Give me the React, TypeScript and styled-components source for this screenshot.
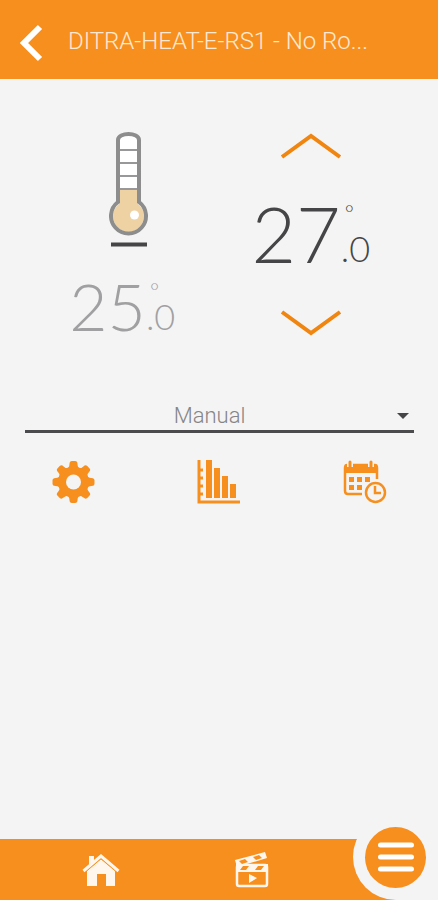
import React, { useState } from "react";
import styled, { createGlobalStyle } from "styled-components";

const orange = "#f78f1e";
const paper = "#f4f4f4";

const GlobalStyle = createGlobalStyle`
  *, *::before, *::after { box-sizing: border-box; }
  body { margin: 0; background: ${paper}; font-family: Roboto, "Liberation Sans", sans-serif; }
  button, select { font: inherit; }
`;

const Screen = styled.div`
  min-height: 100vh;
  display: flex;
  flex-direction: column;
  background: ${paper};
`;

const Header = styled.header`
  display: flex;
  align-items: center;
  gap: 24px;
  height: 79px;
  padding: 6px 20px 0;
  background: ${orange};
`;

const IconButton = styled.button`
  display: flex;
  align-items: center;
  justify-content: center;
  padding: 0;
  border: 0;
  background: none;
  color: ${orange};
  cursor: pointer;

  svg { display: block; }
`;

const Title = styled.h1`
  margin: 0;
  padding-bottom: 4px;
  color: #ffe9d2;
  font-size: 24px;
  font-weight: 300;
  line-height: 32px;
  white-space: nowrap;
`;

const Main = styled.main`
  flex: 1;
  padding: 53px 24px 24px 25px;
`;

const Climate = styled.section`
  display: grid;
  grid-template-columns: 1fr 1fr;
  height: 269px;
`;

const Current = styled.div`
  display: flex;
  flex-direction: column;
  align-items: center;
  gap: 30px;
`;

const Gauge = styled.div`
  padding-left: 14px;

  svg { display: block; }
`;

const Target = styled.div`
  display: flex;
  flex-direction: column;
  align-items: center;
  gap: 40px;
  padding-right: 12px;
`;

const Reading = styled.output<{ $size: number; $height: number; $color: string }>`
  display: flex;
  height: ${(p) => p.$height}px;
  color: ${(p) => p.$color};
  font-family: Lato, "Liberation Sans", sans-serif;
  font-size: ${(p) => p.$size}px;
  font-weight: 300;
  line-height: ${(p) => p.$height - 4}px;
`;

const Fraction = styled.span`
  display: flex;
  flex-direction: column;
  justify-content: space-between;
  padding: 4px 0 8px;
  font-size: 36px;
  font-weight: 300;
  line-height: 28px;
`;

const Degree = styled.span`
  padding-left: 4px;
  font-size: 22px;
  line-height: 18px;
`;

const ModeField = styled.div`
  display: grid;
  align-items: center;
  border-bottom: 3px solid #4b4b4d;

  > * { grid-area: 1 / 1; }
  > svg { justify-self: end; margin-right: 5px; pointer-events: none; }
`;

const ModeSelect = styled.select`
  width: 100%;
  height: 29px;
  padding: 0 20px 0 0;
  appearance: none;
  border: 0;
  background: transparent;
  color: #858587;
  font-size: 22px;
  font-weight: 300;
  line-height: 28px;
  text-align: center;
  text-align-last: center;
`;

const Actions = styled.div`
  display: flex;
  justify-content: space-between;
  padding: 27px 27px 0;
`;

const Footer = styled.footer`
  display: grid;
  grid-template-columns: 1fr 85px;
  align-items: end;
  height: 86px;
`;

const Tabs = styled.nav`
  display: flex;
  justify-content: center;
  gap: 27%;
  height: 61px;
  padding-top: 1px;
  background: ${orange};
`;

const TabLink = styled.a`
  display: flex;
  align-items: center;
  justify-content: center;
  width: 56px;
  color: #fff7ee;

  svg { display: block; }
`;

const MenuCorner = styled.div`
  display: grid;
  height: 86px;
  background: linear-gradient(${orange}, ${orange}) left bottom / 43px 61px no-repeat;
`;

const MenuRing = styled.div`
  display: flex;
  align-items: center;
  justify-content: center;
  border-radius: 43px 0 0 43px;
  background: ${paper};
`;

const MenuButton = styled(IconButton)`
  width: 61px;
  height: 61px;
  border-radius: 50%;
  background: ${orange};
`;

const BackIcon = () => (
  <svg width="24" height="38" viewBox="0 0 24 38" fill="none" stroke="#fff" strokeWidth="6">
    <path d="M20 3 4 19l16 16" />
  </svg>
);

const Thermometer = () => (
  <svg width="40" height="116" viewBox="0 0 40 116" role="img" aria-label="Room temperature">
    <path d="M9 8C9 0 30 0 30 8v62a17.500 17.500 0 1 1-21 0Z" fill="#fff" />
    <path d="M10 58h19v14a15.500 15.500 0 1 1-19 0Z" fill="#efd2a4" />
    <path d="M10 18h19M10 31h19M10 44h19M10 57h19" stroke="#98989a" strokeWidth="2" />
    <path d="M9 8C9 0 30 0 30 8v62a17.500 17.500 0 1 1-21 0Z" fill="none" stroke="#8c8d8c" strokeWidth="4" />
    <circle cx="25.500" cy="83" r="4.500" fill="#fff" />
    <path d="M2 112.500h36" stroke="#454547" strokeWidth="4" />
  </svg>
);

const Chevron = ({ down = false }: { down?: boolean }) => (
  <svg width="62" height="28" viewBox="0 0 62 28" fill="none" stroke="#f0850f" strokeWidth="4">
    <path d={down ? "M2 2 31 23 60 2" : "M2 25 31 4l29 21"} />
  </svg>
);

const GearIcon = () => (
  <svg width="43" height="44" viewBox="-21.5 -22 43 44" fill={orange}>
    {[0, 45, 90, 135, 180, 225, 270, 315].map((a) => (
      <path key={a} transform={`rotate(${a})`} d="M-8-12Q-4-14-4-18Q-4-21-1.500-21H1.500Q4-21 4-18Q4-14 8-12V0H-8Z" />
    ))}
    <circle r="15.500" />
    <circle r="7.500" fill={paper} />
  </svg>
);

const ChartIcon = () => (
  <svg width="44" height="44" viewBox="0 0 44 44" fill={orange}>
    <path d="M9 0h6v38H9zM17 8h6v30h-6zM25 16h6v22h-6zM33 24h6v14h-6z" />
    <path
      d="M2 0v42H43M2 10h4M2 18h4M2 26h4M2 34h4"
      fill="none"
      stroke={orange}
      strokeWidth="3"
    />
  </svg>
);

const ScheduleIcon = () => (
  <svg width="44" height="44" viewBox="0 0 44 44" fill="none" stroke={orange}>
    <path d="M19 34H5q-3 0-3-3V8q0-3 2-3h28q2 0 2 3v11" strokeWidth="2.500" />
    <path d="M2 5h32v8H2z" fill={orange} stroke="none" />
    <path d="M7 1v6M28 1v6" stroke={paper} strokeWidth="6" />
    <path d="M7 2v6M28 2v6" strokeWidth="3" strokeLinecap="round" />
    <path d="M6 17h5v5H6zM14 17h5v5h-5zM22 17h5v5h-5zM6 25h5v5H6zM14 25h5v5h-5z" fill={orange} stroke="none" />
    <circle cx="32.500" cy="32.500" r="12" fill={paper} stroke="none" />
    <circle cx="32.500" cy="32.500" r="9.500" fill={paper} strokeWidth="2.500" />
    <path d="M32 26v7h6" strokeWidth="2.500" />
  </svg>
);

const HomeIcon = () => (
  <svg width="38" height="34" viewBox="0 0 38 34" fill="currentColor">
    <path d="M5 18 19 6l14 12v15h-9V21h-9v12H5Z" />
    <path d="M1 18 19 3l18 15" fill="none" stroke={orange} strokeWidth="5" />
    <path d="M7 3h5v5l-5 4z" />
    <path d="M1.500 18 19 3 36.500 18" fill="none" stroke="currentColor" strokeWidth="3" />
  </svg>
);

const ScenesIcon = () => (
  <svg width="34" height="36" viewBox="0 0 34 36" fill="none">
    <rect x="2" y="13" width="30" height="21" rx="2" stroke="#fff7ee" strokeWidth="2.500" />
    <path d="M1 12h32v8H1zM0 8 30 0l2 6L2 15z" fill="#fff7ee" />
    <path d="m5 18 3-4h6l-3 4zM20 18l3-4h6l-3 4zM4 9l6-2 3 3-6 2zM18 5l6-2 3 3-6 2z" fill={orange} />
    <path d="m14 22 8 4-8 5z" fill="#fff7ee" />
  </svg>
);

const MenuIcon = () => (
  <svg width="38" height="32" viewBox="0 0 38 32" fill="none" stroke="#fff" strokeWidth="5" strokeLinecap="round">
    <path d="M3.500 4h31M3.500 16h31M3.500 28h31" />
  </svg>
);

function Temperature({ value, size, height, color, label }: {
  value: number; size: number; height: number; color: string; label: string;
}) {
  const [whole, tenth] = value.toFixed(1).split(".");
  return (
    <Reading $size={size} $height={height} $color={color} aria-label={label}>
      {whole}
      <Fraction>
        <Degree>°</Degree>
        <span>.{tenth}</span>
      </Fraction>
    </Reading>
  );
}

export default function App() {
  const [target, setTarget] = useState(27);
  const [mode, setMode] = useState("Manual");

  return (
    <>
      <GlobalStyle />
      <Screen>
        <Header>
          <IconButton aria-label="Back"><BackIcon /></IconButton>
          <Title>DITRA-HEAT-E-RS1 - No Ro...</Title>
        </Header>
        <Main>
          <Climate>
            <Current>
              <Gauge><Thermometer /></Gauge>
              <Temperature value={25} size={66} height={60} color="#a0a0a2" label="Current temperature" />
            </Current>
            <Target>
              <IconButton aria-label="Raise temperature" onClick={() => setTarget(target + 0.5)}>
                <Chevron />
              </IconButton>
              <Temperature value={target} size={77} height={70} color="#454547" label="Set temperature" />
              <IconButton aria-label="Lower temperature" onClick={() => setTarget(target - 0.5)}>
                <Chevron down />
              </IconButton>
            </Target>
          </Climate>
          <ModeField>
            <ModeSelect aria-label="Mode" value={mode} onChange={(e) => setMode(e.target.value)}>
              <option>Manual</option>
            </ModeSelect>
            <svg width="12" height="6" viewBox="0 0 12 6"><path d="M0 0h12L6 6Z" fill="#454547" /></svg>
          </ModeField>
          <Actions>
            <IconButton aria-label="Settings"><GearIcon /></IconButton>
            <IconButton aria-label="Statistics"><ChartIcon /></IconButton>
            <IconButton aria-label="Schedule"><ScheduleIcon /></IconButton>
          </Actions>
        </Main>
        <Footer>
          <Tabs>
            <TabLink href="#home" aria-label="Home"><HomeIcon /></TabLink>
            <TabLink href="#scenes" aria-label="Scenes"><ScenesIcon /></TabLink>
          </Tabs>
          <MenuCorner>
            <MenuRing>
              <MenuButton aria-label="Menu"><MenuIcon /></MenuButton>
            </MenuRing>
          </MenuCorner>
        </Footer>
      </Screen>
    </>
  );
}
